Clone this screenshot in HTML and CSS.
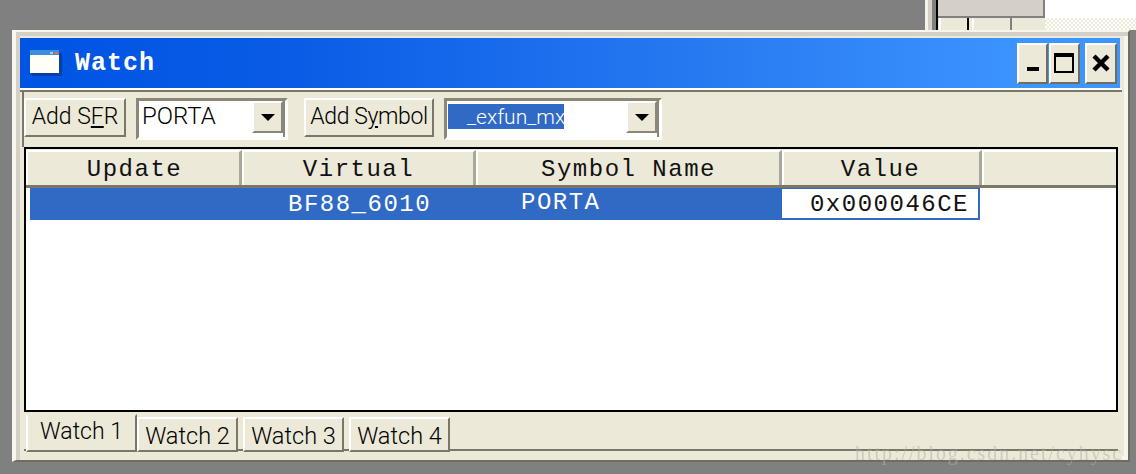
FILE: index.html
```html
<!DOCTYPE html>
<html lang="en">
<head>
<meta charset="utf-8">
<title>Watch</title>
<link rel="stylesheet" href="styles.css">
</head>
<body>
<div class="back-window">
  <div class="back-rail"></div>
  <div class="back-main">
    <div class="back-panel"></div>
    <div class="back-btns"><span class="back-btn"></span><span class="back-btn wide"></span></div>
  </div>
  <div class="back-side"><div class="back-white"></div><div class="back-dither"></div></div>
</div>

<div class="window">
  <header class="titlebar">
    <svg class="app-icon" width="32" height="26" viewBox="0 0 32 26">
      <rect x="2" y="3" width="30" height="23" fill="#0a3fa8"/>
      <rect x="0" y="0" width="29" height="23" fill="#fffff8"/>
      <rect x="0" y="0" width="29" height="5" fill="#3c8fd8"/>
      <rect x="20" y="2" width="3" height="2" fill="#9fd0f0"/>
      <rect x="25" y="2" width="3" height="2" fill="#e8703a"/>
    </svg>
    <span class="title-text">Watch</span>
    <div class="caption-btns">
      <button class="cap-btn"><svg width="14" height="6" viewBox="0 0 14 6"><rect y="1" width="12" height="4"/></svg></button>
      <button class="cap-btn"><svg width="22" height="20" viewBox="0 0 22 20"><path d="M1 3h18v16H1z" fill="none" stroke="#000" stroke-width="2"/><rect x="0" y="0" width="20" height="4"/></svg></button>
      <button class="cap-btn gap"><svg width="18" height="18" viewBox="0 0 18 18"><path d="M2 2l14 14M16 2L2 16" stroke="#000" stroke-width="4.4" fill="none"/></svg></button>
    </div>
  </header>

  <div class="body">
    <div class="toolbar">
      <button class="btn sfr">Add S<u>F</u>R</button>
      <div class="combo porta"><span class="combo-text">PORTA</span><span class="combo-arrow"><i></i></span></div>
      <button class="btn symbol">Add S<u>y</u>mbol</button>
      <div class="combo exfun"><span class="combo-text sel">_exfun_mx</span><span class="combo-arrow"><i></i></span></div>
    </div>

    <div class="list">
      <div class="list-head">
        <div class="col c-update">Update</div>
        <div class="col c-virtual">Virtual</div>
        <div class="col c-symbol">Symbol Name</div>
        <div class="col c-value">Value</div>
        <div class="col c-fill"></div>
      </div>
      <div class="row">
        <div class="cell c1"></div>
        <div class="cell c2">BF88_6010</div>
        <div class="cell c3">PORTA</div>
        <div class="cell c4">0x000046CE</div>
      </div>
    </div>

    <div class="tabs">
      <div class="tab active">Watch 1</div>
      <div class="tab">Watch 2</div>
      <div class="tab">Watch 3</div>
      <div class="tab">Watch 4</div>
    </div>
  </div>
</div>
<div class="watermark">http://blog.csdn.net/cyhysc</div>
</body>
</html>
```

FILE: styles.css
```css
* { box-sizing: border-box; }
html, body { margin: 0; height: 100%; }
body {
  background: #808080;
  width: 1136px;
  height: 474px;
  overflow: hidden;
  position: relative;
  font-family: Roboto, "Liberation Sans", Arial, sans-serif;
  font-weight: 300;
  color: #000;
}

/* window behind, top right */
.back-window {
  position: absolute;
  left: 925px;
  top: 0;
  width: 211px;
  height: 30px;
  display: flex;
}
.back-rail {
  width: 13px;
  background: linear-gradient(90deg, #f5f3ea 0 3px, #d4d0c8 3px 7px, #808080 7px 11px, #000 11px 13px);
}
.back-main { width: 107px; background: #ece9d8; }
.back-panel { height: 18px; background: #d4d0c8; border-right: 2px solid #808080; border-bottom: 2px solid #808080; }
.back-btns { display: flex; gap: 3px; padding-left: 1px; }
.back-btn { width: 30px; height: 12px; background: #ece9d8; border-left: 2px solid #fff; border-right: 2px solid #000; }
.back-btn.wide { width: 40px; border-right: 2px solid #808080; }
.back-side { flex: 1; }
.back-white { height: 18px; background: #fff; }
.back-dither { height: 12px; background: repeating-conic-gradient(#ece9d8 0 25%, #fff 0 50%) 0 0 / 4px 4px; }

/* window */
.window {
  position: absolute;
  left: 12px;
  top: 30px;
  width: 1118px;
  height: 432px;
  background: #ece9d8;
  padding: 6px 8px 0 4px;
  border-top: 2px solid #f7f5ec;
  border-left: 4px solid #f7f5ec;
  border-right: 2px solid #6f6c60;
  border-bottom: 2px solid #6f6c60;
  box-shadow: inset 4px 4px 0 #d4d0c8, inset -4px -4px 0 #f7f5ec;
  display: flex;
  flex-direction: column;
}

.titlebar {
  height: 50px;
  flex: none;
  background: linear-gradient(90deg, #0054e3 0%, #0a5ce6 25%, #2a7cf2 65%, #3d95ff 92%);
  display: flex;
  align-items: center;
  padding-left: 10px;
}
.app-icon { flex: none; }
.title-text {
  margin-left: 13px;
  color: #fff;
  font: bold 25px/1 "Liberation Mono", monospace;
  letter-spacing: 1px;
}
.caption-btns { margin-left: auto; margin-right: 3px; display: flex; gap: 1px; }
.cap-btn {
  width: 31px;
  height: 41px;
  padding: 0;
  background: #ece9d8;
  border: 2px solid;
  border-color: #fff #6f6c60 #6f6c60 #fff;
  display: flex;
  align-items: center;
  justify-content: center;
}
.cap-btn:first-child svg { margin-top: 11px; margin-left: 2px; }
.cap-btn.gap { margin-left: 4px; width: 32px; }

/* body */
.body {
  flex: 1;
  min-height: 0;
  display: flex;
  flex-direction: column;
  margin: 0 -2px 0 0;
  background: #ece9d8;
  border-top: 2px solid #fff;
  box-shadow: inset 0 2px 0 #7a7768;
  padding: 0 4px 0 4px;
}
.toolbar {
  height: 57px;
  flex: none;
  display: flex;
  align-items: flex-start;
  padding-top: 8px;
  box-shadow: inset 2px 2px 0 #7a7768;
  margin-left: -2px;
  padding-left: 2px;
}
.btn {
  height: 39px;
  padding: 0 0 2px;
  font: 300 23px/1 Roboto, "Liberation Sans", Arial, sans-serif;
  color: #000;
  background: #ece9d8;
  border: 2px solid;
  border-color: #fff #7a7768 #7a7768 #fff;
  white-space: nowrap;
}
.btn.sfr { width: 102px; margin-right: 10px; }
.btn.symbol { width: 130px; margin-left: 16px; margin-right: 10px; letter-spacing: -.4px; }
.combo {
  height: 42px;
  display: flex;
  align-items: stretch;
  justify-content: space-between;
  background: #fff;
  border: 3px solid;
  border-color: #8a8778 #fff #fff #8a8778;
  box-shadow: inset -2px 0 0 #8a8778;
}
.combo.porta { width: 152px; }
.combo.exfun { width: 218px; }
.combo-text {
  flex: 1;
  font-size: 24px;
  line-height: 30px;
  padding-left: 3px;
  white-space: nowrap;
}
.combo-text.sel {
  flex: none;
  width: 116px;
  height: 25px;
  line-height: 26px;
  margin: 3px 0 0 1px;
  padding: 0 0 0 19px;
  font-size: 21px;
  background: #316ac5;
  color: #fff;
}
.combo-arrow {
  width: 31px;
  height: 32px;
  margin-right: 2px;
  background: #ece9d8;
  border: 2px solid;
  border-color: #fff #8a8778 #8a8778 #fff;
  display: flex;
  align-items: center;
  justify-content: center;
}
.combo-arrow i {
  width: 0;
  height: 0;
  border-left: 7px solid transparent;
  border-right: 7px solid transparent;
  border-top: 7px solid #000;
}

/* list */
.list {
  height: 265px;
  flex: none;
  background: #fff;
  border: 2px solid #000;
}
.list-head { display: flex; height: 39px; background: #ece9d8; border-bottom: 3px solid #7a7768; padding-top: 1px; }
.col {
  border-top: 2px solid #fff;
  border-left: 2px solid #fff;
  border-right: 3px solid #aca899;
  text-align: center;
  font: 400 24px/35px "Liberation Mono", monospace;
  letter-spacing: 1.5px;
  white-space: nowrap;
  color: #111;
}
.c-update { width: 216px; padding-left: 2px; }
.c-virtual { width: 234px; }
.c-symbol { width: 306px; }
.c-value { width: 200px; padding-right: 2px; }
.c-fill { flex: 1; border-right: 0; }
.row { display: flex; height: 32px; padding-left: 4px; font: 400 24px/34px "Liberation Mono", monospace; letter-spacing: 1.5px; color: #fff; white-space: nowrap; }
.cell { background: #316ac5; }
.c1 { width: 258px; }
.c2 { width: 233px; }
.c3 { width: 261px; line-height: 30px; }
.c4 {
  width: 198px;
  background: #fff;
  color: #111;
  border: 2px solid #316ac5;
  border-top-width: 1px;
  border-left: 0;
  text-align: right;
  padding-right: 9px;
  line-height: 32px;
}

/* tabs */
.tabs { display: flex; align-items: flex-start; gap: 5px; padding-left: 2px; height: 39px; box-shadow: inset 0 -2px 0 #7a7768; }
.tab {
  width: 101px;
  height: 35px;
  margin-top: 5px;
  background: #ece9d8;
  border: 2px solid;
  border-color: #fff #7a7768 #7a7768 #fff;
  font-size: 23.5px;
  line-height: 34px;
  text-align: center;
  white-space: nowrap;
}
.tab.active { width: 111px; height: 38px; margin-top: 2px; margin-right: -5px; line-height: 32px; font-size: 23px; border-top-color: #ece9d8; }

.watermark {
  position: absolute;
  left: 855px;
  top: 443px;
  font: 20px/1 "Liberation Serif", serif;
  letter-spacing: 1.95px;
  color: rgba(180, 178, 168, .55);
  filter: blur(.4px);
  white-space: nowrap;
}
```
